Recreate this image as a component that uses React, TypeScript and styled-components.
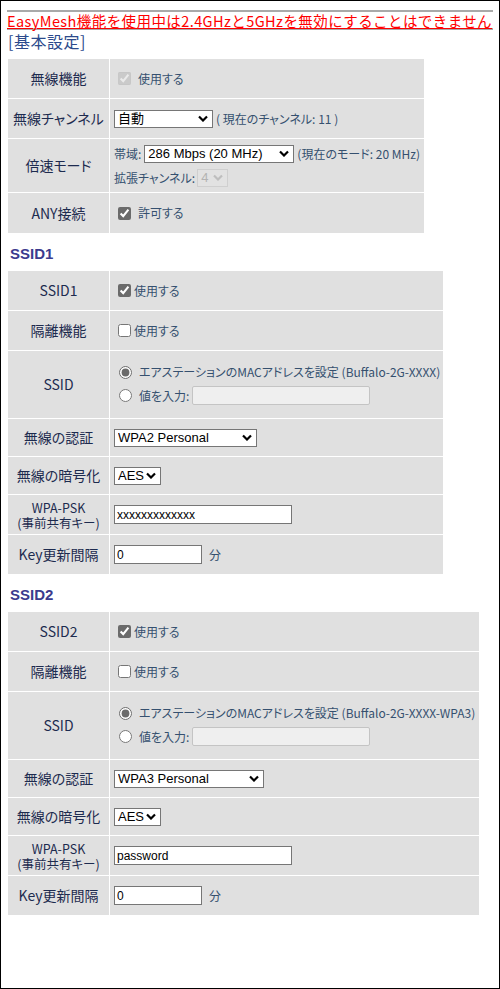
import React, { FC } from 'react'
import styled, { createGlobalStyle } from 'styled-components'

const chevron = (color: string) =>
	`url("data:image/svg+xml;utf8,<svg xmlns='http://www.w3.org/2000/svg' width='10' height='7' viewBox='0 0 10 7'><path d='M1 1.5 L5 5.5 L9 1.5' fill='none' stroke='${encodeURIComponent(
		color
	)}' stroke-width='2.2'/></svg>")`

const GlobalStyle = createGlobalStyle`
	body {
		margin: 0;
		background: #fff;
	}
`

const Frame = styled.div`
	box-sizing: border-box;
	width: 500px;
	height: 989px;
	border: 1px solid #000;
	padding: 9px 6px 0;
	font-family: 'Noto Sans CJK JP', sans-serif;
`

const Notice = styled.div`
	border-top: 2px solid #a9a9a9;
	border-bottom: 2px solid #a9a9a9;
	color: #ff0000;
	font-size: 14.5px;
	line-height: 15px;
	padding-top: 1px;
	text-decoration: underline;
	white-space: nowrap;
	letter-spacing: 0.42px;
`

const BlockTitle = styled.div`
	color: #2c4a8c;
	font-size: 16px;
	line-height: 20px;
	letter-spacing: 0.5px;
	margin: 1px 0 8px 1px;
`

const SsidTitle = styled.div`
	color: #3b3b8e;
	font-family: 'Liberation Sans', Arial, sans-serif;
	font-weight: bold;
	font-size: 15px;
	line-height: 18px;
	margin: 12px 0 8px 3px;
`

const Table = styled.div<{ $width: number }>`
	width: ${({ $width }) => $width}px;
	margin-left: 1px;
	display: flex;
	flex-direction: column;
	gap: 1px;
`

const Row = styled.div<{ $h: number }>`
	display: grid;
	grid-template-columns: 101px 1fr;
	column-gap: 1px;
	height: ${({ $h }) => $h}px;
`

const Label = styled.div<{ $small?: boolean }>`
	background: #e0e0e0;
	display: flex;
	flex-direction: column;
	align-items: center;
	justify-content: center;
	text-align: center;
	color: #1d2b4f;
	font-size: ${({ $small }) => ($small ? 12.5 : 14)}px;
	line-height: 15px;
	font-feature-settings: 'palt';
`

const Value = styled.div`
	background: #e0e0e0;
	display: flex;
	flex-direction: column;
	justify-content: center;
	gap: 6px;
	padding-left: 4px;
	color: #35506f;
	font-size: 12px;
	line-height: 16px;
	font-feature-settings: 'palt';
	white-space: nowrap;
`

const Line = styled.div<{ $gap?: number }>`
	display: flex;
	align-items: center;
	gap: ${({ $gap }) => $gap ?? 3}px;
`

const Check = styled.input.attrs({ type: 'checkbox' })<{ $spaced?: boolean }>`
	width: 13px;
	height: 13px;
	margin: 0 ${({ $spaced }) => ($spaced ? 4 : 0)}px 0 4px;
	accent-color: #6b6b6b;
`

const Radio = styled.input.attrs({ type: 'radio' })`
	width: 13px;
	height: 13px;
	margin: 0 4px 0 5px;
	accent-color: #6b6b6b;
`

const Select = styled.select<{ $width: number }>`
	appearance: none;
	width: ${({ $width }) => $width}px;
	height: 18px;
	box-sizing: border-box;
	border: 1px solid #767676;
	border-radius: 0;
	background: #fff ${chevron('#000')} no-repeat right 4px center / 10px 7px;
	color: #000;
	font-family: 'Liberation Sans', 'Noto Sans CJK JP', sans-serif;
	font-size: 13px;
	padding: 0 16px 0 3px;
	&:disabled {
		border-color: #c8c8c8;
		color: #a0a0a0;
		background: #e4e4e4 ${chevron('#b0b0b0')} no-repeat right 4px center / 10px 7px;
	}
`

const TextInput = styled.input<{ $width: number }>`
	width: ${({ $width }) => $width}px;
	height: 19px;
	box-sizing: border-box;
	border: 1px solid #767676;
	border-radius: 0;
	padding: 0 2px;
	font-family: 'Liberation Sans', sans-serif;
	font-size: 12px;
	color: #000;
	&:disabled {
		background: #efefef;
		border-color: #c4c4c4;
		border-radius: 2px;
	}
`

const Unit = styled.span`
	margin-left: 2px;
`

interface SsidProps {
	name: string
	width: number
	mac: string
	auth: string
	psk: string
}

const SsidTable: FC<SsidProps> = ({ name, width, mac, auth, psk }) => (
	<Table $width={width}>
		<Row $h={39}>
			<Label>{name}</Label>
			<Value>
				<Line>
					<Check defaultChecked />
					使用する
				</Line>
			</Value>
		</Row>
		<Row $h={39}>
			<Label>隔離機能</Label>
			<Value>
				<Line>
					<Check />
					使用する
				</Line>
			</Value>
		</Row>
		<Row $h={67}>
			<Label>SSID</Label>
			<Value>
				<Line>
					<Radio name={name} defaultChecked />
					エアステーションのMACアドレスを設定 ({mac})
				</Line>
				<Line>
					<Radio name={name} />
					値を入力:
					<TextInput $width={178} disabled />
				</Line>
			</Value>
		</Row>
		<Row $h={37}>
			<Label>無線の認証</Label>
			<Value>
				<Line>
					<Select $width={auth === 'WPA3 Personal' ? 150 : 143} defaultValue={auth}>
						<option>{auth}</option>
					</Select>
				</Line>
			</Value>
		</Row>
		<Row $h={37}>
			<Label>無線の暗号化</Label>
			<Value>
				<Line>
					<Select $width={47} defaultValue="AES">
						<option>AES</option>
					</Select>
				</Line>
			</Value>
		</Row>
		<Row $h={39}>
			<Label $small>
				<span>WPA-PSK</span>
				<span>(事前共有キー)</span>
			</Label>
			<Value>
				<Line>
					<TextInput $width={178} defaultValue={psk} />
				</Line>
			</Value>
		</Row>
		<Row $h={39}>
			<Label>Key更新間隔</Label>
			<Value>
				<Line $gap={5}>
					<TextInput $width={88} defaultValue="0" />
					<Unit>分</Unit>
				</Line>
			</Value>
		</Row>
	</Table>
)

const App: FC = () => (
	<>
		<GlobalStyle />
		<Frame>
			<Notice>EasyMesh機能を使用中は2.4GHzと5GHzを無効にすることはできません</Notice>
			<BlockTitle>[基本設定]</BlockTitle>
			<Table $width={416}>
				<Row $h={39}>
					<Label>無線機能</Label>
					<Value>
						<Line>
							<Check $spaced defaultChecked disabled />
							使用する
						</Line>
					</Value>
				</Row>
				<Row $h={39}>
					<Label>無線チャンネル</Label>
					<Value>
						<Line>
							<Select $width={99} defaultValue="自動">
								<option>自動</option>
							</Select>
							( 現在のチャンネル: 11 )
						</Line>
					</Value>
				</Row>
				<Row $h={53}>
					<Label>倍速モード</Label>
					<Value>
						<Line>
							帯域:
							<Select $width={150} defaultValue="286">
								<option value="286">286 Mbps (20 MHz)</option>
							</Select>
							(現在のモード: 20 MHz)
						</Line>
						<Line $gap={2}>
							拡張チャンネル:
							<Select $width={31} defaultValue="4" disabled>
								<option>4</option>
							</Select>
						</Line>
					</Value>
				</Row>
				<Row $h={40}>
					<Label>ANY接続</Label>
					<Value>
						<Line>
							<Check $spaced defaultChecked />
							許可する
						</Line>
					</Value>
				</Row>
			</Table>
			<SsidTitle>SSID1</SsidTitle>
			<SsidTable
				name="SSID1"
				width={435}
				mac="Buffalo-2G-XXXX"
				auth="WPA2 Personal"
				psk="xxxxxxxxxxxxx"
			/>
			<SsidTitle>SSID2</SsidTitle>
			<SsidTable
				name="SSID2"
				width={471}
				mac="Buffalo-2G-XXXX-WPA3"
				auth="WPA3 Personal"
				psk="password"
			/>
		</Frame>
	</>
)

export default App
